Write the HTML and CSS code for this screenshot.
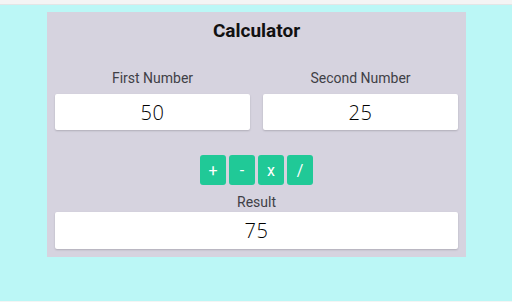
FILE: index.html
```html
<!DOCTYPE html>
<html>
<head>
<meta charset="utf-8">
<link rel="stylesheet" href="styles.css">
</head>
<body>
<div class="page">
  <div class="card">
    <h1 class="title">Calculator</h1>
    <div class="row">
      <div class="field">
        <label class="label">First Number</label>
        <div class="box">50</div>
      </div>
      <div class="field">
        <label class="label">Second Number</label>
        <div class="box">25</div>
      </div>
    </div>
    <div class="ops">
      <button class="op">+</button>
      <button class="op">-</button>
      <button class="op">x</button>
      <button class="op">/</button>
    </div>
    <div class="result">
      <label class="label">Result</label>
      <div class="box box-result">75</div>
    </div>
  </div>
</div>
</body>
</html>
```
FILE: styles.css
```css
html, body {
  margin: 0;
  padding: 0;
}
body {
  background: #f4f4f4;
  font-family: Roboto, "Liberation Sans", sans-serif;
  height: 302px;
  overflow: hidden;
}
.page {
  margin-top: 4px;
  border-top: 1px solid #e3e6e6;
  background: #bbf7f6;
  height: 297px;
  padding-top: 7px;
  box-sizing: border-box;
}
.card {
  margin-left: 47px;
  width: 419px;
  box-sizing: border-box;
  background: #d6d3df;
  padding: 8px 8px 8px;
  display: flex;
  flex-direction: column;
}
.title {
  margin: 0;
  text-align: center;
  font-size: 19px;
  line-height: 22px;
  font-weight: 700;
  color: #111;
}
.row {
  margin-top: 28px;
  display: flex;
  gap: 13px;
}
.field {
  flex: 1;
  display: flex;
  flex-direction: column;
  gap: 8px;
}
.label {
  display: block;
  text-align: center;
  font-size: 14px;
  line-height: 16px;
  color: #3f3f46;
}
.box {
  height: 36px;
  background: #fff;
  border-radius: 2px;
  box-shadow: 0 1px 2px rgba(0, 0, 0, 0.18);
  display: flex;
  align-items: center;
  justify-content: center;
  font-family: "Open Sans", "Noto Sans", sans-serif;
  font-size: 20px;
  font-weight: 300;
  letter-spacing: 0.5px;
  color: #000;
}
.ops {
  margin-top: 25px;
  display: flex;
  justify-content: center;
  gap: 3px;
}
.op {
  width: 26px;
  height: 30px;
  padding: 0;
  border: none;
  border-radius: 3px;
  background: #20c997;
  color: #fff;
  font-family: Roboto, "Liberation Sans", sans-serif;
  font-size: 16px;
  font-weight: 400;
}
.result {
  margin-top: 9px;
  display: flex;
  flex-direction: column;
  gap: 2px;
}
.box-result {
  height: 37px;
}
```
